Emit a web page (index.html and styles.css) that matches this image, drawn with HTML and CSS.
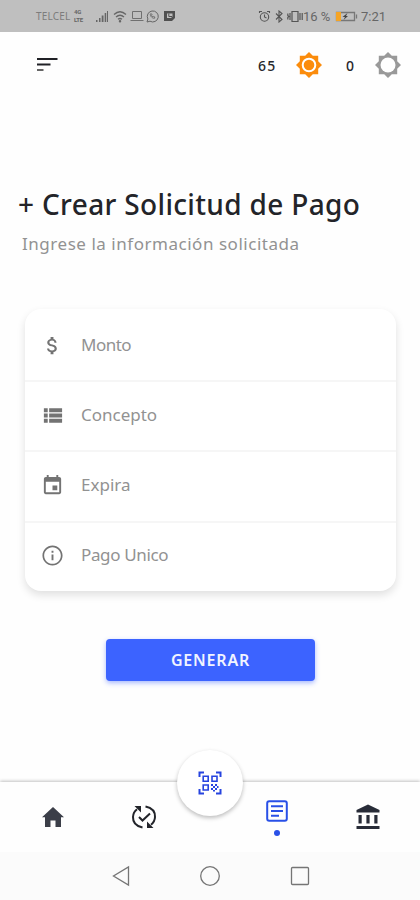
FILE: index.html
```html
<!DOCTYPE html>
<html lang="es">
<head>
<meta charset="utf-8">
<title>Crear Solicitud de Pago</title>
<link rel="stylesheet" href="styles.css">
</head>
<body>
<div class="phone">
  <div class="status">
    <div class="status-left">
      <span class="carrier">TELCEL</span>
      <span class="lte"><span>4G</span><span>LTE</span></span>
      <svg class="signal" width="14" height="13" viewBox="0 0 14 13"><path d="M1 10h1.500v2H1zM4 8h1.500v4H4zM6.700 5.500h1.800V12H6.700zM9.700 3h1.500v9H9.700zM12 1h1v11h-1z" fill="#666"/></svg>
      <svg class="wifi" width="15" height="13" viewBox="0 0 15 13" fill="none" stroke="#666" stroke-width="1.300"><path d="M1 4.500q6-5.500 12 0M3 7q4-3.500 8 0M5 9.300q2-1.600 4 0"/><circle cx="7" cy="11.300" r=".6" fill="#555"/></svg>
      <svg class="laptop" width="14" height="12" viewBox="0 0 14 12" fill="none" stroke="#707070"><path d="M2.500 1.500h9v7h-9zM.5 10.500h13"/></svg>
      <svg class="whats" width="13" height="13" viewBox="0 0 13 13" fill="none" stroke="#666"><path d="M1 12l.9-3A5.500 5.500 0 1 1 4 11.200z"/><path d="M4.500 3.800c-1 2 2.300 5.200 4.300 4.300l-.2-1.300-1-.4-.7.500-1.300-1.300.5-.7-.4-1z" stroke-width=".9"/></svg>
      <svg width="11" height="12" viewBox="0 0 11 12"><path d="M0 1h11v7L8 11H0z" fill="#505050"/><path d="M3 3.500h5.500v3L7 8H3z" fill="#bfbfbf"/><path d="M4.800 3.500v3h3.500" fill="none" stroke="#505050"/></svg>
    </div>
    <div class="status-right">
      <svg class="alarm" width="13" height="13" viewBox="0 0 13 13" fill="none" stroke="#555" stroke-width="1.100"><circle cx="6.500" cy="7" r="4.200"/><path d="M1.500 3V1.500h2.500M11.500 3V1.500H9M6.500 4.500V7L8.500 8"/></svg>
      <svg class="bt" width="8" height="13" viewBox="0 0 8 13" fill="none" stroke="#555" stroke-width="1.100"><path d="M1 3.500l6 6L4 12V1l3 2.500-6 6"/></svg>
      <svg class="vib" width="16" height="13" viewBox="0 0 16 13" fill="none" stroke="#555" stroke-width="1.200"><path d="M5 1.500h6v10H5zM3 3v7M.8 3.500v2l1 1-1 1v2M13 3v7M15.200 3v7"/></svg>
      <span class="pct">16 %</span>
      <svg class="batt" width="23" height="11" viewBox="0 0 23 11"><path d="M1.500 1.500h18v8h-18zM21.500 3.500v4" fill="none" stroke="#777" stroke-width="1.300"/><path d="M1 1h5v9H1z" fill="#f5a425"/><path d="M12.500 2L7.500 6H10L8.500 9l4.500-4h-2z" fill="#444"/></svg>
      <span class="clock">7:21</span>
    </div>
  </div>

  <header class="top">
    <svg class="menu" width="22" height="16" viewBox="0 0 22 16" fill="#202126"><path d="M0 1h20.500v2H0zM0 6.500h13.500v2H0z"/><path d="M0 12h6.500v2H0z" fill="#666"/></svg>
    <span class="points p65">65</span>
    <svg class="sun" width="26" height="26" viewBox="-13 -13 26 26"><path d="M0-13L3.800-9.200H9.200V-3.800L13 0 9.200 3.800V9.200H3.800L0 13-3.800 9.200H-9.200V3.800L-13 0-9.200-3.800V-9.200H-3.800z" fill="#fb8c0c"/><circle r="6.300" fill="#fb8c0c" stroke="#fff" stroke-width="2"/></svg>
    <span class="points p0">0</span>
    <svg class="sun gray" width="26" height="26" viewBox="-13 -13 26 26"><path d="M0-13L3.800-9.200H9.200V-3.800L13 0 9.200 3.800V9.200H3.800L0 13-3.800 9.200H-9.200V3.800L-13 0-9.200-3.800V-9.200H-3.800z" fill="#999"/><circle r="7.500" fill="#fff"/></svg>
  </header>

  <main>
    <h1>+ Crear Solicitud de Pago</h1>
    <p class="sub">Ingrese la información solicitada</p>

    <section class="card">
      <div class="row">
        <svg viewBox="0 0 24 24"><path d="M11.800 10.900c-2.270-.59-3-1.200-3-2.150 0-1.090 1.010-1.850 2.700-1.850 1.780 0 2.440.85 2.500 2.100h2.210c-.07-1.720-1.120-3.300-3.210-3.810V3h-3v2.160c-1.940.42-3.500 1.680-3.500 3.610 0 2.310 1.910 3.460 4.700 4.130 2.500.6 3 1.480 3 2.410 0 .69-.49 1.790-2.700 1.790-2.060 0-2.870-.92-2.980-2.100h-2.200c.12 2.190 1.760 3.420 3.680 3.830V21h3v-2.150c1.950-.37 3.500-1.500 3.500-3.550 0-2.840-2.430-3.810-4.700-4.400z"/></svg>
        <span class="label monto">Monto</span>
      </div>
      <div class="row">
        <svg viewBox="0 0 24 24"><path d="M3 4.500h4v4H3zM8.500 4.500H22v4H8.500zM3 10h4v4H3zM8.500 10H22v4H8.500zM3 15.500h4v4H3zM8.500 15.500H22v4H8.500z"/></svg>
        <span class="label">Concepto</span>
      </div>
      <div class="row">
        <svg viewBox="0 0 24 24"><path d="M17 12h-5v5h5v-5zM16 1v2H8V1H6v2H5c-1.110 0-1.990.9-1.990 2L3 19c0 1.100.89 2 2 2h14c1.100 0 2-.9 2-2V5c0-1.100-.9-2-2-2h-1V1h-2zm3 18H5V8h14v11z"/></svg>
        <span class="label">Expira</span>
      </div>
      <div class="row">
        <svg viewBox="0 0 24 24"><path d="M11 7h2v2h-2zm0 4h2v6h-2zm1-9.500C6.200 1.500 1.500 6.200 1.500 12S6.200 22.500 12 22.500 22.500 17.800 22.500 12 17.800 1.500 12 1.500zm0 19.200c-4.800 0-8.700-3.900-8.700-8.700S7.200 3.300 12 3.300s8.700 3.900 8.700 8.700-3.900 8.700-8.700 8.700z"/></svg>
        <span class="label pago">Pago Unico</span>
      </div>
    </section>

    <button class="generate" type="button">GENERAR</button>
  </main>

  <nav class="tabs">
    <div class="tab"><svg width="22" height="20" viewBox="0 0 22 20"><path d="M11 0l11 10.300h-3V20h-5.500v-6.500h-5V20H3v-9.700H0z" fill="#3b3e48"/></svg></div>
    <div class="tab"><svg class="sync" width="26" height="26" viewBox="0 0 26 26" fill="none" stroke="#22242a" stroke-width="2"><path d="M11.500 23.500C4.500 22 1.800 17.500 2 13c.1-3 1.600-5.800 4-7.700M14.500 2.500C21.500 4 24.200 8.500 24 13c-.1 3-1.600 5.800-4 7.700M8 13l3.500 3.500 7.500-7"/><path d="M3.500 2H10v6.500zM22.500 24H16v-6.500z" fill="#22242a" stroke="none"/></svg></div>
    <div class="tab scan-slot"><div class="scan">
      <svg width="24" height="24" viewBox="0 0 24 24" fill="none" stroke="#2744df" stroke-width="2"><path d="M1.500 6V1.500H6M18 1.500h4.500V6M1.500 18v4.500H6M18 22.500h4.500V18"/><path d="M5.200 5.200h5v5h-5zM14 5.200h5v5h-5zM5.200 14h5v5h-5z" stroke-width="1.600"/><path d="M13 13h2v2h-2zM17 13h2v2h-2zM15 15h2v2h-2zM13 17h2v2h-2zM17 17h2v2h-2zM19 15h1.500v2H19zM15 19h2v1.500h-2z" fill="#2744df" stroke="none"/></svg>
    </div></div>
    <div class="tab active"><svg width="22" height="22" viewBox="0 0 22 22" fill="none" stroke="#2950e7" stroke-width="2"><rect x="1.200" y="1.200" width="19.600" height="19.600" rx="2"/><path d="M5 6.300h12M5 11h12M5 15.700h8"/></svg><i class="dot"></i></div>
    <div class="tab"><svg class="bank" width="24" height="26" viewBox="0 0 24 26" fill="#282c38"><path d="M12 .5L.5 6V8.500h23V6zM2.500 11h3.200v8.500H2.500zM10.400 11h3.200v8.500h-3.200zM18.300 11h3.200v8.500h-3.200zM.5 22h23v3H.5z"/></svg></div>
  </nav>

  <div class="system">
    <svg width="18" height="22" viewBox="0 0 18 22"><path d="M16.500 2v18L1.500 11z"/></svg>
    <svg width="22" height="22" viewBox="0 0 22 22"><circle cx="11" cy="11" r="9.300"/></svg>
    <svg width="20" height="22" viewBox="0 0 20 22"><rect x="1.500" y="2.500" width="17" height="17" rx="1"/></svg>
  </div>
</div>
</body>
</html>
```
FILE: styles.css
```css
* { box-sizing: border-box; }
body { margin: 0; background: #fefefe; font-family: "Noto Sans", "Open Sans", sans-serif; }
svg { display: block; flex: none; }
.phone { width: 420px; height: 900px; display: flex; flex-direction: column; overflow: hidden; background: #fefefe; }

.status { height: 32px; flex: none; background: #bfbfbf; display: flex; justify-content: space-between; align-items: center; padding: 0 34px 0 36px; color: #666; font-family: Roboto, sans-serif; }
.status-left, .status-right { display: flex; align-items: center; }
.carrier { font-family: "Noto Sans", sans-serif; font-size: 10px; width: 38px; letter-spacing: 0.2px; color: #7c7c7c; }
.lte { display: flex; flex-direction: column; font-size: 6px; line-height: 8px; font-weight: 700; letter-spacing: -0.3px; width: 21px; }
.wifi { margin-left: 4px; }
.laptop { margin-left: 2px; }
.whats { margin: 0 5px 0 2px; }
.bt { margin-left: 4px; }
.vib { margin-left: 4px; }
.pct { font-size: 13px; margin-left: 0; width: 32px; white-space: nowrap; }
.batt { margin-right: 3px; }
.clock { font-size: 13px; width: 25px; white-space: nowrap; }

.top { height: 66px; flex: none; display: flex; align-items: center; padding-left: 37px; }
.points { font-size: 14px; font-weight: 500; color: #26272b; letter-spacing: 1.2px; }
.p65 { margin-left: 199px; width: 38px; }
.p0 { margin-left: 24px; width: 29px; }

main { display: flex; flex-direction: column; height: 684px; }
h1 { margin: 87px 0 0 18px; font-size: 28px; line-height: 38px; font-weight: 500; color: #232429; white-space: nowrap; letter-spacing: 0.34px; }
.sub { margin: 7px 0 0 22px; font-size: 17px; line-height: 28px; font-weight: 400; color: #929292; white-space: nowrap; letter-spacing: 0.53px; }

.card { margin: 51px 24px 0 25px; height: 282px; border-radius: 16px; background: #fff; box-shadow: 0 4px 8px rgba(0, 0, 0, 0.12); display: grid; grid-template-rows: 71px 70px 71px 70px; }
.row { display: flex; align-items: center; padding-left: 16px; gap: 17px; font-size: 17px; color: #929292; }
.row:first-child { padding-top: 2px; }
.row + .row { border-top: 2px solid #f6f6f6; padding-bottom: 2px; }
.row:last-child { padding-bottom: 4px; }
.row svg { width: 23px; height: 23px; fill: #737373; }
.label { padding-bottom: 2px; }
.monto { letter-spacing: -0.5px; }
.pago { letter-spacing: -0.35px; }

.generate { margin: 48px 0 0 106px; width: 209px; height: 42px; border: 0; border-radius: 4px; background: #3c63ff; color: #f1f4ff; font: 600 16px "Noto Sans", sans-serif; letter-spacing: 0.8px; box-shadow: 0 2px 5px rgba(60, 99, 255, 0.45); }

.tabs { height: 70px; flex: none; display: grid; grid-template-columns: 106px 76px 56px 78px 104px; background: #fefefe; box-shadow: 0 -1px 3px rgba(0, 0, 0, 0.24); }
.tab { display: flex; flex-direction: column; align-items: center; justify-content: center; }
.scan-slot { justify-content: flex-start; }
.scan { width: 66px; height: 66px; flex: none; margin-top: -32px; border-radius: 50%; background: #fff; box-shadow: 0 2px 4px rgba(0, 0, 0, 0.26); display: flex; align-items: center; justify-content: center; }
.active { padding-top: 2px; }
.dot { width: 6px; height: 6px; margin-top: 8px; border-radius: 50%; background: #2950e7; }

.system { height: 48px; flex: none; display: grid; grid-template-columns: 18px 22px 20px; column-gap: 69px; padding-left: 112px; align-items: center; background: #fbfbfb; }
.system svg { fill: none; stroke: #757575; stroke-width: 1.300; }
```
